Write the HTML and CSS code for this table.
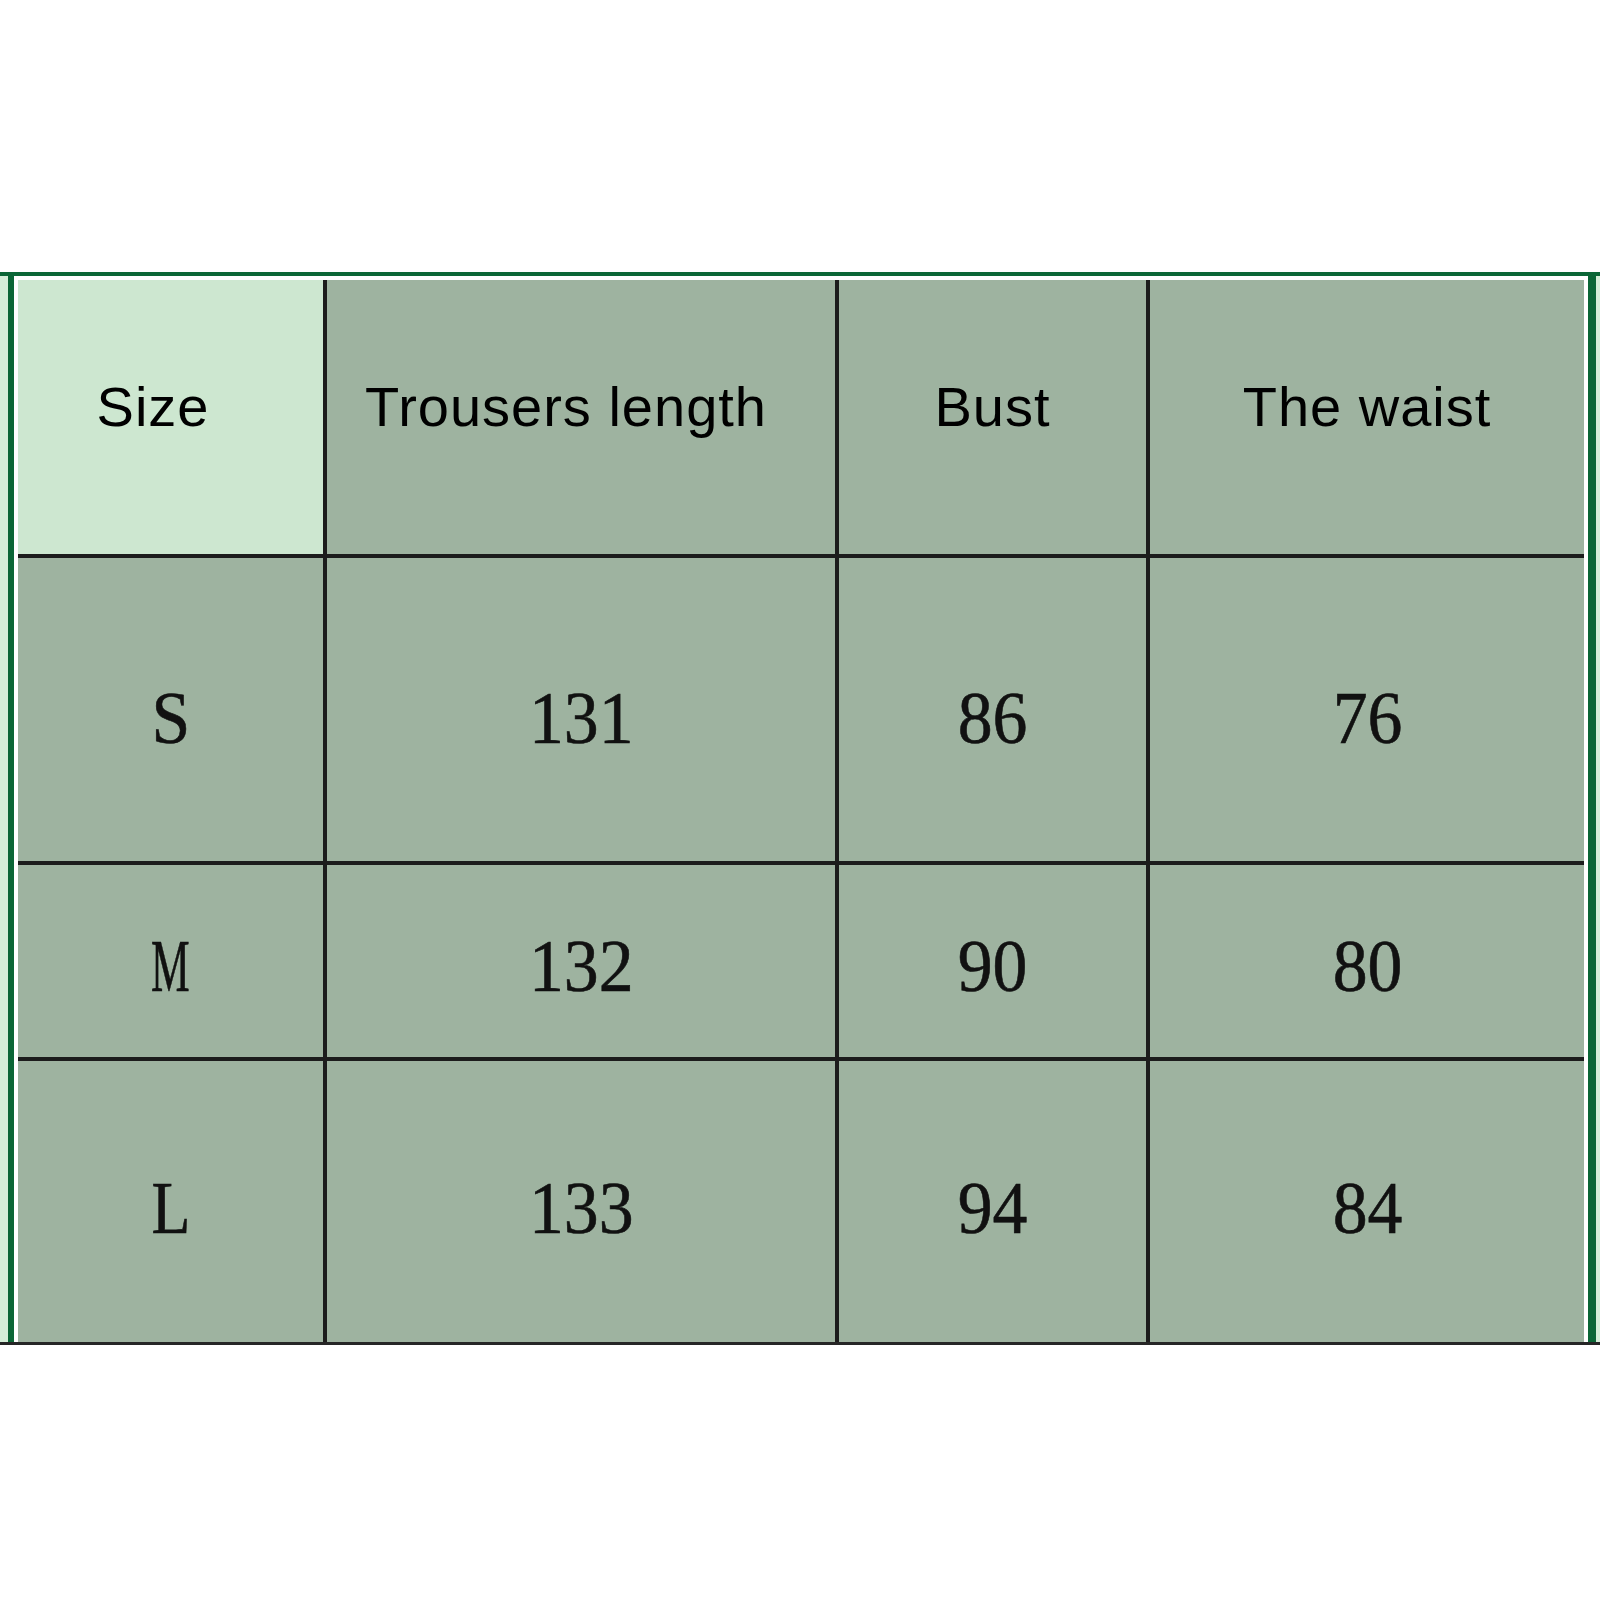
FILE: index.html
```html
<!DOCTYPE html>
<html lang="en">
<head>
<meta charset="utf-8">
<title>Size chart</title>
<link rel="stylesheet" href="styles.css">
</head>
<body>
<div class="sheet">
  <div class="frame">
    <div class="grid">
      <div class="cell head first"><span class="h-size">Size</span></div>
      <div class="cell head"><span class="h-len">Trousers length</span></div>
      <div class="cell head"><span>Bust</span></div>
      <div class="cell head"><span>The waist</span></div>

      <div class="cell num row-s"><span>S</span></div>
      <div class="cell num row-s"><span>131</span></div>
      <div class="cell num row-s"><span>86</span></div>
      <div class="cell num row-s"><span>76</span></div>

      <div class="cell num row-m"><span class="narrow">M</span></div>
      <div class="cell num row-m"><span>132</span></div>
      <div class="cell num row-m"><span>90</span></div>
      <div class="cell num row-m"><span>80</span></div>

      <div class="cell num row-l"><span class="slim">L</span></div>
      <div class="cell num row-l"><span>133</span></div>
      <div class="cell num row-l"><span>94</span></div>
      <div class="cell num row-l"><span>84</span></div>
    </div>
  </div>
</div>
</body>
</html>
```
FILE: styles.css
```css
html, body {
  margin: 0;
  padding: 0;
  background: #ffffff;
}

.sheet {
  margin-top: 272px;
  border-top: 4px solid #0b6636;
  border-bottom: 3px solid #262626;
  background: #d5eed8;
  padding: 0 4px 0 8px;
}

.frame {
  background: #ffffff;
  border-left: 6px solid #0b6636;
  border-right: 8px solid #0b6636;
  padding: 4px 4px 0 4px;
}

.grid {
  display: grid;
  grid-template-columns: 305px 508px 307px 434px;
  grid-template-rows: 274px 303px 192px 281px;
  gap: 4px;
  background: #1c1c1c;
}

.cell {
  background: #9eb3a0;
  display: flex;
  align-items: center;
  justify-content: center;
}

.cell.first {
  background: #cde7d0;
}

.head {
  font-family: "Liberation Sans", Arial, sans-serif;
  font-size: 56px;
  letter-spacing: 1px;
  color: #000;
  line-height: 1;
  padding-bottom: 20px;
  box-sizing: border-box;
}

.h-size {
  margin-right: 35px;
}

.h-len {
  margin-right: 30px;
}

.num {
  font-family: "Liberation Serif", "Times New Roman", serif;
  font-size: 75px;
  color: #111;
  line-height: 1;
  box-sizing: border-box;
  -webkit-text-stroke: 0.6px #111;
}

.num span {
  display: inline-block;
  transform: scaleX(0.93);
}

.num span.narrow {
  transform: scaleX(0.58);
}

.num span.slim {
  transform: scaleX(0.85);
}

.row-s {
  padding-top: 16px;
}

.row-m {
  padding-top: 8px;
}

.row-l {
  padding-top: 12px;
}
```
